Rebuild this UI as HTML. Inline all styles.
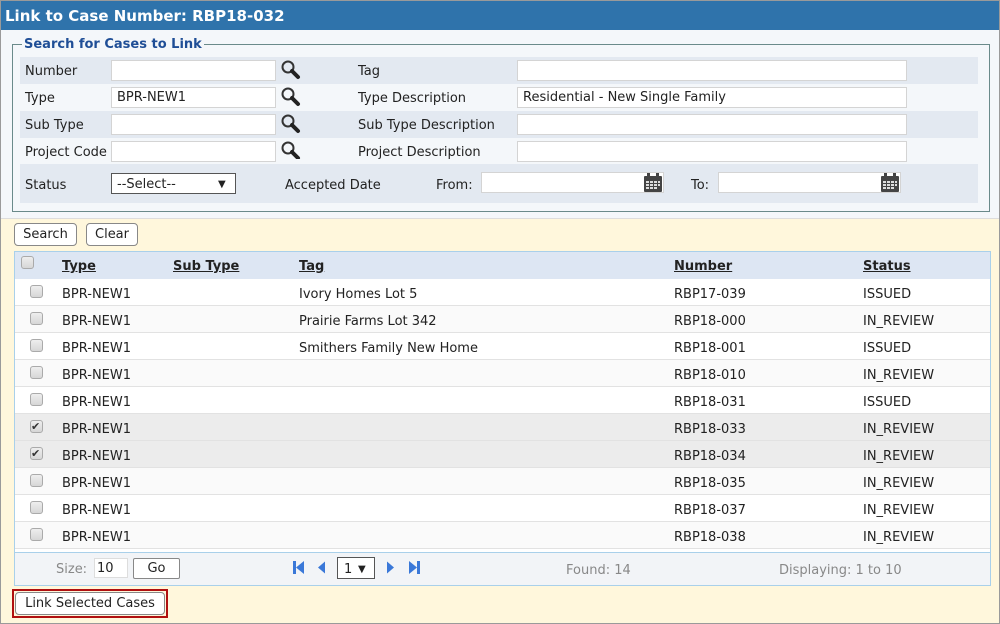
<!DOCTYPE html>
<html><head><meta charset="utf-8"><style>
*{box-sizing:border-box;margin:0;padding:0}
body{width:1000px;height:624px;overflow:hidden;font-family:"DejaVu Sans","Liberation Sans",sans-serif;font-size:13px;color:#222;background:#fff;position:relative}
.a{position:absolute}
.t{position:absolute;white-space:nowrap;line-height:16px;margin-top:1px}
.inp{position:absolute;background:#fff;border:1px solid #d4d4d4;height:21px;padding-left:5px;line-height:20px}
.btn{position:absolute;background:#fff;border:1px solid #888;border-radius:4px;height:23px;line-height:22px;text-align:center}
.cb{position:absolute;width:13px;height:13px;border:1px solid #aaa;border-radius:3px;background:linear-gradient(#eee,#d6d6d6)}
.row{position:absolute;left:15px;width:975px;height:27px;border-bottom:1px solid #e2e2e2}
.hd{position:absolute;font-weight:bold;text-decoration:underline;line-height:16px;margin-top:1px}
</style></head><body>
<div class="a" style="left:0;top:0;width:1000px;height:624px;border:1px solid #9a9a9a;background:#f4f7fa"></div>
<div class="a" style="left:1px;top:1px;width:998px;height:29px;background:#2f73ab"></div>
<div class="t" style="left:5px;top:7px;color:#fff;font-weight:bold;font-size:15px">Link to Case Number: RBP18-032</div>

<div class="a" style="left:12px;top:44px;width:978px;height:168px;border:1px solid #6a8a8a"></div>
<div class="t" style="left:22px;top:36px;background:#f4f7fa;padding:0 2px;color:#1f4e96;font-weight:bold">Search for Cases to Link</div>
<div class="a" style="left:20px;top:57px;width:958px;height:27px;background:#e3e9f1"></div>
<div class="a" style="left:20px;top:111px;width:958px;height:27px;background:#e3e9f1"></div>
<div class="a" style="left:20px;top:164px;width:958px;height:39px;background:#e3e9f1"></div>

<div class="t" style="left:25px;top:63px">Number</div>
<div class="t" style="left:25px;top:90px">Type</div>
<div class="t" style="left:25px;top:117px">Sub Type</div>
<div class="t" style="left:25px;top:144px">Project Code</div>
<div class="t" style="left:25px;top:177px">Status</div>
<div class="inp" style="left:111px;top:60px;width:165px"></div>
<div class="inp" style="left:111px;top:87px;width:165px">BPR-NEW1</div>
<div class="inp" style="left:111px;top:114px;width:165px"></div>
<div class="inp" style="left:111px;top:141px;width:165px"></div>
<svg class="a" style="left:280px;top:59px" width="22" height="100" viewBox="0 0 22 100">
<g fill="none" stroke="#333" stroke-width="2"><circle cx="8" cy="8" r="5.5"/><circle cx="8" cy="35" r="5.5"/><circle cx="8" cy="62" r="5.5"/><circle cx="8" cy="89" r="5.5"/></g>
<g stroke="#222" stroke-width="4" stroke-linecap="round"><path d="M12 12L18 18M12 39L18 45M12 66L18 72M12 93L18 99"/></g></svg>
<div class="t" style="left:358px;top:63px">Tag</div>
<div class="t" style="left:358px;top:90px">Type Description</div>
<div class="t" style="left:358px;top:117px">Sub Type Description</div>
<div class="t" style="left:358px;top:144px">Project Description</div>
<div class="inp" style="left:517px;top:60px;width:390px"></div>
<div class="inp" style="left:517px;top:87px;width:390px">Residential - New Single Family</div>
<div class="inp" style="left:517px;top:114px;width:390px"></div>
<div class="inp" style="left:517px;top:141px;width:390px"></div>
<div class="a" style="left:111px;top:173px;width:125px;height:21px;border:1px solid #555;background:#fff"></div>
<div class="t" style="left:117px;top:176px">--Select--</div>
<div class="t" style="left:218px;top:176px;font-size:10px">▼</div>
<div class="t" style="left:285px;top:177px">Accepted Date</div>
<div class="t" style="left:436px;top:177px">From:</div>
<div class="t" style="left:691px;top:177px">To:</div>
<div class="inp" style="left:481px;top:172px;width:183px"></div>
<div class="inp" style="left:718px;top:172px;width:183px"></div>
<svg class="a" style="left:643px;top:173px" width="20" height="20" viewBox="0 0 20 20"><rect x="1" y="3" width="18" height="16" rx="1" fill="#444"/><rect x="4" y="0" width="3" height="5" fill="#444"/><rect x="13" y="0" width="3" height="5" fill="#444"/><g fill="#ddd"><rect x="3" y="8" width="3" height="2"/><rect x="7" y="8" width="3" height="2"/><rect x="11" y="8" width="3" height="2"/><rect x="15" y="8" width="2" height="2"/><rect x="3" y="11" width="3" height="2"/><rect x="7" y="11" width="3" height="2"/><rect x="11" y="11" width="3" height="2"/><rect x="15" y="11" width="2" height="2"/><rect x="3" y="14" width="3" height="2"/><rect x="7" y="14" width="3" height="2"/><rect x="11" y="14" width="3" height="2"/></g></svg>
<svg class="a" style="left:880px;top:173px" width="20" height="20" viewBox="0 0 20 20"><rect x="1" y="3" width="18" height="16" rx="1" fill="#444"/><rect x="4" y="0" width="3" height="5" fill="#444"/><rect x="13" y="0" width="3" height="5" fill="#444"/><g fill="#ddd"><rect x="3" y="8" width="3" height="2"/><rect x="7" y="8" width="3" height="2"/><rect x="11" y="8" width="3" height="2"/><rect x="15" y="8" width="2" height="2"/><rect x="3" y="11" width="3" height="2"/><rect x="7" y="11" width="3" height="2"/><rect x="11" y="11" width="3" height="2"/><rect x="15" y="11" width="2" height="2"/><rect x="3" y="14" width="3" height="2"/><rect x="7" y="14" width="3" height="2"/><rect x="11" y="14" width="3" height="2"/></g></svg>

<div class="a" style="left:1px;top:218px;width:998px;height:405px;background:#fff7dc;border-top:1px solid #ddd"></div>
<div class="btn" style="left:14px;top:223px;width:63px">Search</div>
<div class="btn" style="left:86px;top:223px;width:52px">Clear</div>

<div class="a" style="left:14px;top:251px;width:977px;height:335px;border:1px solid #a9d0ea;background:#fff"></div>
<div class="a" style="left:15px;top:252px;width:975px;height:27px;background:#dde6f3"></div>
<div class="cb" style="left:21px;top:256px"></div>
<div class="hd" style="left:62px;top:258px">Type</div>
<div class="hd" style="left:173px;top:258px">Sub Type</div>
<div class="hd" style="left:299px;top:258px">Tag</div>
<div class="hd" style="left:674px;top:258px">Number</div>
<div class="hd" style="left:863px;top:258px">Status</div>

<div class="row" style="top:279px;background:#fff"></div>
<div class="row" style="top:306px;background:#fafafa"></div>
<div class="row" style="top:333px;background:#fff"></div>
<div class="row" style="top:360px;background:#fafafa"></div>
<div class="row" style="top:387px;background:#fff"></div>
<div class="row" style="top:414px;background:#ececec"></div>
<div class="row" style="top:441px;background:#ececec"></div>
<div class="row" style="top:468px;background:#fafafa"></div>
<div class="row" style="top:495px;background:#fff"></div>
<div class="row" style="top:522px;background:#fafafa"></div>

<div class="cb" style="left:30px;top:285px"></div><div class="cb" style="left:30px;top:312px"></div><div class="cb" style="left:30px;top:339px"></div><div class="cb" style="left:30px;top:366px"></div><div class="cb" style="left:30px;top:393px"></div><div class="cb" style="left:30px;top:420px"></div><div class="cb" style="left:30px;top:447px"></div><div class="cb" style="left:30px;top:474px"></div><div class="cb" style="left:30px;top:501px"></div><div class="cb" style="left:30px;top:528px"></div>
<div class="t" style="left:31px;top:418px;font-size:11px;color:#333">✔</div>
<div class="t" style="left:31px;top:445px;font-size:11px;color:#333">✔</div>

<div class="t" style="left:62px;top:286px">BPR-NEW1</div><div class="t" style="left:299px;top:286px">Ivory Homes Lot 5</div><div class="t" style="left:674px;top:286px">RBP17-039</div><div class="t" style="left:863px;top:286px">ISSUED</div>
<div class="t" style="left:62px;top:313px">BPR-NEW1</div><div class="t" style="left:299px;top:313px">Prairie Farms Lot 342</div><div class="t" style="left:674px;top:313px">RBP18-000</div><div class="t" style="left:863px;top:313px">IN_REVIEW</div>
<div class="t" style="left:62px;top:340px">BPR-NEW1</div><div class="t" style="left:299px;top:340px">Smithers Family New Home</div><div class="t" style="left:674px;top:340px">RBP18-001</div><div class="t" style="left:863px;top:340px">ISSUED</div>
<div class="t" style="left:62px;top:367px">BPR-NEW1</div><div class="t" style="left:674px;top:367px">RBP18-010</div><div class="t" style="left:863px;top:367px">IN_REVIEW</div>
<div class="t" style="left:62px;top:394px">BPR-NEW1</div><div class="t" style="left:674px;top:394px">RBP18-031</div><div class="t" style="left:863px;top:394px">ISSUED</div>
<div class="t" style="left:62px;top:421px">BPR-NEW1</div><div class="t" style="left:674px;top:421px">RBP18-033</div><div class="t" style="left:863px;top:421px">IN_REVIEW</div>
<div class="t" style="left:62px;top:448px">BPR-NEW1</div><div class="t" style="left:674px;top:448px">RBP18-034</div><div class="t" style="left:863px;top:448px">IN_REVIEW</div>
<div class="t" style="left:62px;top:475px">BPR-NEW1</div><div class="t" style="left:674px;top:475px">RBP18-035</div><div class="t" style="left:863px;top:475px">IN_REVIEW</div>
<div class="t" style="left:62px;top:502px">BPR-NEW1</div><div class="t" style="left:674px;top:502px">RBP18-037</div><div class="t" style="left:863px;top:502px">IN_REVIEW</div>
<div class="t" style="left:62px;top:529px">BPR-NEW1</div><div class="t" style="left:674px;top:529px">RBP18-038</div><div class="t" style="left:863px;top:529px">IN_REVIEW</div>

<div class="a" style="left:15px;top:552px;width:975px;height:33px;background:#f2f4f7;border-top:1px solid #a9d0ea"></div>
<div class="t" style="left:56px;top:561px;color:#888">Size:</div>
<div class="inp" style="left:94px;top:558px;width:34px;height:20px;border-color:#ddd;padding-left:2px;line-height:19px">10</div>
<div class="btn" style="left:133px;top:558px;width:47px;height:21px;line-height:20px;border-radius:2px">Go</div>
<svg class="a" style="left:292px;top:559px" width="132" height="18" viewBox="0 0 132 18">
<g fill="#3a78d8"><rect x="1" y="2" width="3" height="13"/><path d="M4 8.5L12 2V15Z"/><path d="M26 8.5L33 2.5V14.5Z"/><path d="M95 2.5L102 8.5L95 14.5Z"/><path d="M117 2L125 8.5L117 15Z"/><rect x="125" y="2" width="3" height="13"/></g></svg>
<div class="a" style="left:337px;top:557px;width:38px;height:22px;border:1px solid #555;background:#fff"></div>
<div class="t" style="left:344px;top:561px">1</div>
<div class="t" style="left:358px;top:561px;font-size:10px">▼</div>
<div class="t" style="left:566px;top:562px;color:#888">Found: 14</div>
<div class="t" style="left:779px;top:562px;color:#888">Displaying: 1 to 10</div>

<div class="a" style="left:12px;top:589px;width:156px;height:29px;border:2px solid #b01010"></div>
<div class="btn" style="left:15px;top:592px;width:150px">Link Selected Cases</div>
</body></html>
